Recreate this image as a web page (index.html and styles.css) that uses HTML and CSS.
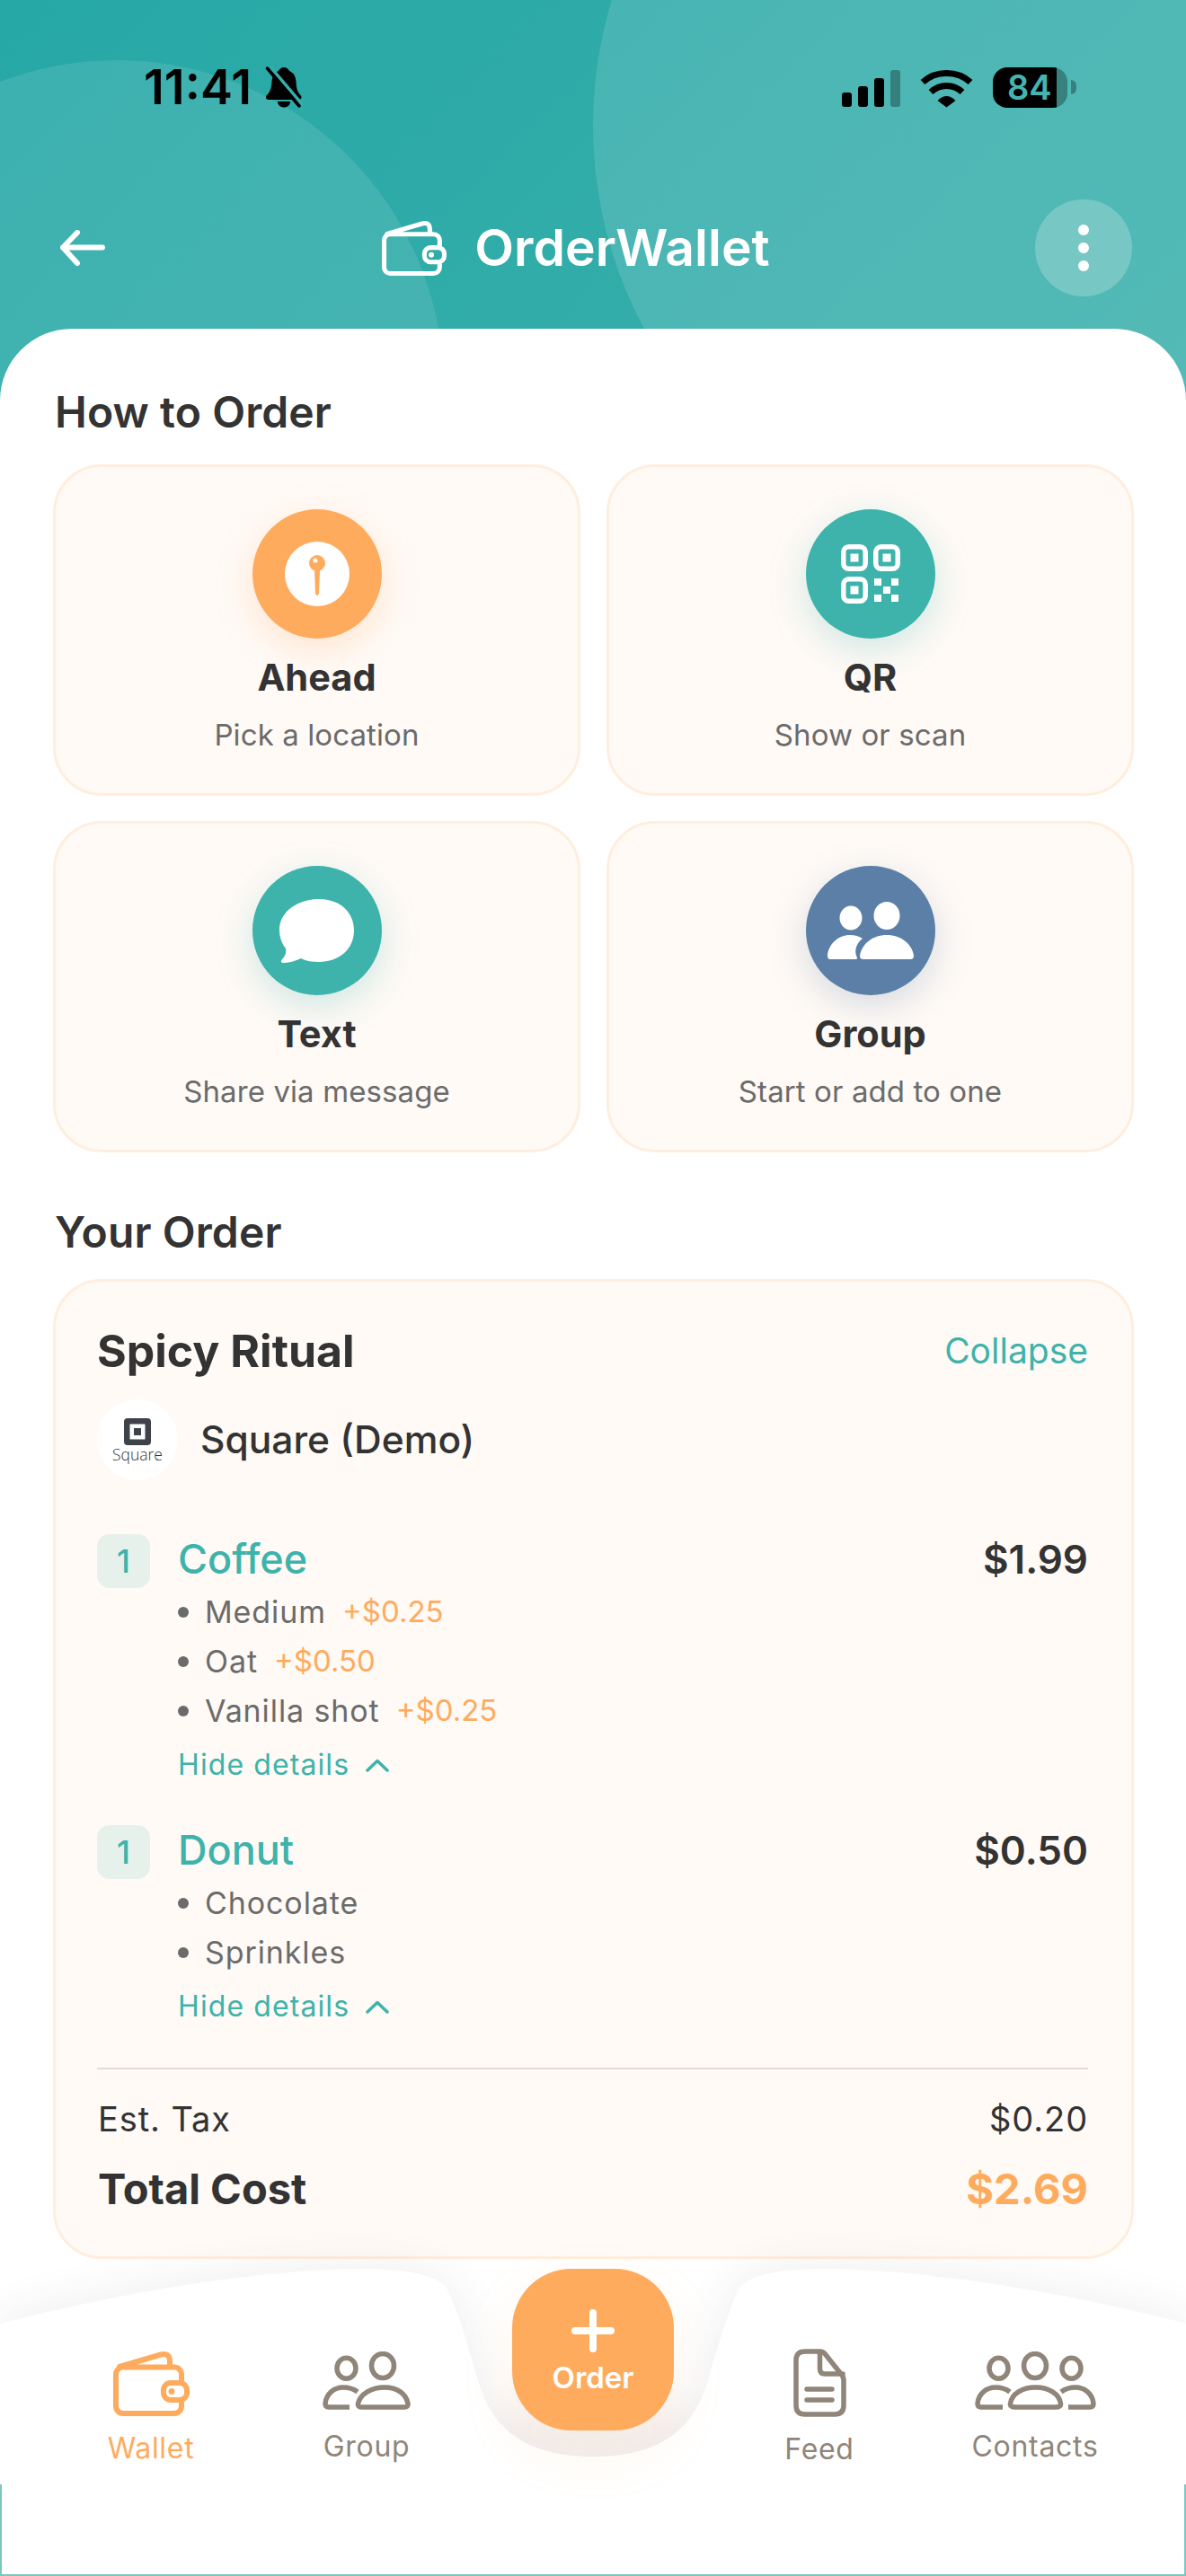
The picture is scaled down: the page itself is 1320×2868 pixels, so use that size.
FILE: index.html
```html
<!DOCTYPE html>
<html lang="en">
<head>
<meta charset="utf-8">
<title>OrderWallet</title>
<link rel="stylesheet" href="styles.css">
</head>
<body>
<svg class="defs" width="0" height="0" aria-hidden="true">
  <defs>
    <symbol id="wallet" viewBox="0 0 85 72">
      <path d="M11 17.5H68a8 8 0 0 1 8 8V32M76 57v4a8 8 0 0 1-8 8H11a8 8 0 0 1-8-8V25.5a8 8 0 0 1 8-8M7 17 53 3.500Q63 1 63 11v6" fill="none" stroke="currentColor" stroke-width="6" stroke-linejoin="round" stroke-linecap="round"/>
      <rect x="56" y="35" width="26" height="19" rx="8" fill="none" stroke="currentColor" stroke-width="6"/>
      <ellipse cx="65" cy="44.500" rx="3.500" ry="3.500" fill="currentColor"/>
    </symbol>
  </defs>
</svg>
<div class="phone">
  <header class="hero">
    <div class="status">
      <div class="status-left">
        <span class="time">11:41</span>
        <svg class="bell" viewBox="0 0 42 46">
          <path d="M21 1c3 0 5 2 6 4 5 2 7 6 7.500 12 .5 7 1 11 5 15 2 2 1 5-2 5H4c-3 0-4-3-2-5 4-4 5-8 5.500-15C8 11 10 7 15 5c1-2 3-4 6-4Z" fill="#000"/>
          <path d="M14 39h14c0 4-3 6.500-7 6.500S14 43 14 39Z" fill="#000"/>
          <path d="M5.500 0 42 43" stroke="#35aeab" stroke-width="3.500"/>
          <path d="M2.500 2 38 44" stroke="#000" stroke-width="3.500" stroke-linecap="round"/>
        </svg>
      </div>
      <div class="status-right">
        <svg class="signal" viewBox="0 0 65 41">
          <rect x="0" y="25" width="11" height="16" rx="3"/>
          <rect x="18" y="18" width="11" height="23" rx="3"/>
          <rect x="36" y="9" width="11" height="32" rx="3"/>
          <rect x="54" y="0" width="11" height="41" rx="3" opacity=".3"/>
        </svg>
        <svg class="wifi" viewBox="0 0 59 43">
          <path d="M3 14.500C17 1 42 1 56 14.500" fill="none" stroke="#000" stroke-width="7"/>
          <path d="M12 25.500C22 16 37 16 47 25.500" fill="none" stroke="#000" stroke-width="7"/>
          <path d="M19.500 35Q29.500 25 39.500 35L29.500 42.500Z" fill="#000"/>
        </svg>
        <div class="battery"><span class="battery-num">84</span></div>
        <span class="battery-nub"></span>
      </div>
    </div>
    <div class="titlebar">
      <div class="back">
        <svg class="back-icon" viewBox="0 0 50 40"><path d="M47 19.500H3M19 3 3 19.500 19 37" fill="none" stroke="#fff" stroke-width="6" stroke-linecap="round" stroke-linejoin="round"/></svg>
      </div>
      <div class="brand">
        <svg class="brand-icon"><use href="#wallet"/></svg>
        <span class="brand-name">OrderWallet</span>
      </div>
      <div class="menu"><span class="dot"></span><span class="dot"></span><span class="dot"></span></div>
    </div>
  </header>

  <main class="sheet">
    <h2 class="section first">How to Order</h2>
    <div class="methods">
      <div class="method">
        <div class="method-icon orange">
          <svg class="i-pin" viewBox="0 0 72 72">
            <circle cx="36" cy="36" r="36" fill="#fff"/>
            <path d="M33 30 34 58Q36 62 38 58L39 30Z" fill="#ffab5e"/>
            <circle cx="36" cy="24" r="9" fill="#ffab5e"/>
            <circle cx="34" cy="21" r="2.500" fill="#fff"/>
          </svg>
        </div>
        <div class="method-name">Ahead</div>
        <div class="method-sub">Pick a location</div>
      </div>
      <div class="method">
        <div class="method-icon teal">
          <svg class="i-qr" viewBox="0 0 66 66">
            <g fill="none" stroke="#fff" stroke-width="5.500">
              <rect x="2.750" y="2.750" width="24.500" height="24.500" rx="6"/>
              <rect x="38.750" y="2.750" width="24.500" height="24.500" rx="6"/>
              <rect x="2.750" y="38.750" width="24.500" height="24.500" rx="6"/>
            </g>
            <g fill="#fff">
              <rect x="10.500" y="10.500" width="9" height="9"/>
              <rect x="46.500" y="10.500" width="9" height="9"/>
              <rect x="10.500" y="46.500" width="9" height="9"/>
              <rect x="37" y="38" width="8" height="8"/>
              <rect x="56" y="38" width="8" height="8"/>
              <rect x="47" y="47" width="8" height="8"/>
              <rect x="37" y="56" width="8" height="8"/>
              <rect x="56" y="56" width="8" height="8"/>
            </g>
          </svg>
        </div>
        <div class="method-name">QR</div>
        <div class="method-sub">Show or scan</div>
      </div>
      <div class="method">
        <div class="method-icon teal">
          <svg class="i-msg" viewBox="0 0 83 71">
            <path d="M44 0C68 0 83 15 83 35C83 56 66 70 44 70C36 70 30 69 24 66C18 69 10 71 4 71C2 71 1 69 3 67C7 63 8 58 7 55C2 48 0 42 0 34C0 15 19 0 44 0Z" fill="#fff"/>
          </svg>
        </div>
        <div class="method-name">Text</div>
        <div class="method-sub">Share via message</div>
      </div>
      <div class="method">
        <div class="method-icon blue">
          <svg class="i-group" viewBox="0 0 96 64">
            <ellipse cx="26" cy="18" rx="12.500" ry="13.500" fill="#fff"/>
            <ellipse cx="66" cy="15.500" rx="14.500" ry="15.500" fill="#fff"/>
            <path d="M3 64H31C33.500 64 33.500 62.500 32 60C30 54 32 46 39 41C35 38.500 31 37 25 37C12 37 1 47 0 60C0 62.500 1 64 3 64Z" fill="#fff"/>
            <path d="M40 64H92C95 64 96 62.500 96 60C94 47 82 37 66 37C50 37 38 47 36 60C36 62.500 37 64 40 64Z" fill="#fff"/>
          </svg>
        </div>
        <div class="method-name">Group</div>
        <div class="method-sub">Start or add to one</div>
      </div>
    </div>

    <h2 class="section second">Your Order</h2>
    <section class="order">
      <div class="order-head">
        <span class="merchant">Spicy Ritual</span>
        <span class="collapse">Collapse</span>
      </div>
      <div class="vendor">
        <div class="vendor-logo">
          <svg class="square-mark" viewBox="0 0 30 30">
            <path fill-rule="evenodd" d="M4 0H26a4 4 0 0 1 4 4V26a4 4 0 0 1-4 4H4a4 4 0 0 1-4-4V4a4 4 0 0 1 4-4ZM7 6.500a.5.5 0 0 0-.5.5V23a.5.5 0 0 0 .5.5H23a.5.5 0 0 0 .5-.5V7a.5.5 0 0 0-.5-.5Z" fill="#3e4349"/>
            <rect x="11" y="11" width="8" height="8" fill="#3e4349"/>
          </svg>
          <span class="square-word">Square</span>
        </div>
        <span class="vendor-name">Square (Demo)</span>
      </div>

      <div class="item">
        <div class="qty">1</div>
        <div class="item-body">
          <div class="item-row">
            <span class="item-name">Coffee</span>
            <span class="item-price">$1.99</span>
          </div>
          <ul class="opts">
            <li class="opt"><span class="opt-name">Medium</span><span class="opt-add">+$0.25</span></li>
            <li class="opt"><span class="opt-name">Oat</span><span class="opt-add">+$0.50</span></li>
            <li class="opt"><span class="opt-name">Vanilla shot</span><span class="opt-add">+$0.25</span></li>
          </ul>
          <div class="hide">Hide details
            <svg class="chev" viewBox="0 0 26 15"><path d="M2 13 13 2.500 24 13" fill="none" stroke="#3db3ab" stroke-width="3.500" stroke-linecap="round" stroke-linejoin="round"/></svg>
          </div>
        </div>
      </div>

      <div class="item">
        <div class="qty">1</div>
        <div class="item-body">
          <div class="item-row">
            <span class="item-name">Donut</span>
            <span class="item-price">$0.50</span>
          </div>
          <ul class="opts">
            <li class="opt"><span class="opt-name">Chocolate</span></li>
            <li class="opt"><span class="opt-name">Sprinkles</span></li>
          </ul>
          <div class="hide">Hide details
            <svg class="chev" viewBox="0 0 26 15"><path d="M2 13 13 2.500 24 13" fill="none" stroke="#3db3ab" stroke-width="3.500" stroke-linecap="round" stroke-linejoin="round"/></svg>
          </div>
        </div>
      </div>

      <div class="divider"></div>
      <div class="sum tax"><span>Est. Tax</span><span>$0.20</span></div>
      <div class="sum total"><span>Total Cost</span><span class="total-val">$2.69</span></div>
    </section>
  </main>

  <nav class="tabbar">
    <svg class="tab-shape" viewBox="0 2400 1320 468" preserveAspectRatio="none">
      <defs>
        <filter id="soft" x="-10%" y="-30%" width="120%" height="160%"><feGaussianBlur stdDeviation="26"/></filter>
        <filter id="softer" x="-40%" y="-40%" width="180%" height="180%"><feGaussianBlur stdDeviation="22"/></filter>
      </defs>
      <path d="M0 2587C130 2553 290 2526 404 2526C450 2526 485 2532 497 2547C512 2578 523 2620 532 2650C545 2695 575 2735 660 2735C745 2735 775 2695 788 2650C797 2620 808 2578 823 2547C835 2532 870 2526 916 2526C1030 2526 1190 2553 1320 2587V2868H0Z" fill="#4a3f5c" opacity=".09" filter="url(#soft)"/>
      <ellipse cx="660" cy="2705" rx="115" ry="35" fill="#8a6060" opacity=".06" filter="url(#softer)"/>
      <path d="M0 2587C130 2553 290 2526 404 2526C450 2526 485 2532 497 2547C512 2578 523 2620 532 2650C545 2695 575 2735 660 2735C745 2735 775 2695 788 2650C797 2620 808 2578 823 2547C835 2532 870 2526 916 2526C1030 2526 1190 2553 1320 2587V2868H0Z" fill="#fff"/>
    </svg>
    <div class="tabs">
      <div class="tab active">
        <svg class="t-wallet"><use href="#wallet"/></svg>
        <span class="tab-label">Wallet</span>
      </div>
      <div class="tab">
        <svg class="t-group" viewBox="0 0 98 65" preserveAspectRatio="xMidYMin meet">
          <g fill="none" stroke="currentColor" stroke-width="5.500" stroke-linecap="round" stroke-linejoin="round">
            <ellipse cx="26.500" cy="18.700" rx="10.500" ry="11.500"/>
            <ellipse cx="67" cy="16" rx="12.500" ry="13.500"/>
            <path d="M30 62H7Q3 62 3 58C4 47 13 40 23 40C30 40 35 42 39 45" stroke-linecap="butt"/>
            <path d="M43 62H91Q95.500 62 95 58C93 47 83 40 69 40C55 40 42 47 39.500 58Q39 62 43 62Z"/>
          </g>
        </svg>
        <span class="tab-label">Group</span>
      </div>
      <button class="order-btn">
        <svg class="plus" viewBox="0 0 48 48"><path d="M24 4V44M4 24H44" stroke="#fff" stroke-width="8" stroke-linecap="round"/></svg>
        <span class="order-label">Order</span>
      </button>
      <div class="tab">
        <svg class="t-feed" viewBox="0 0 59 76">
          <g fill="none" stroke="currentColor" stroke-width="5.500" stroke-linecap="round" stroke-linejoin="round">
            <path d="M13 3H30Q33 3 35 5.500L53 28Q56 31 56 35V63Q56 73 46 73H13Q3 73 3 63V13Q3 3 13 3Z"/>
            <path d="M29.500 4V22Q29.500 28 35 28H55"/>
            <path d="M15 45H43M15 57H43"/>
          </g>
        </svg>
        <span class="tab-label">Feed</span>
      </div>
      <div class="tab">
        <svg class="t-contacts" viewBox="0 0 135 65" preserveAspectRatio="xMidYMin meet">
          <g fill="none" stroke="currentColor" stroke-width="5.500" stroke-linecap="round" stroke-linejoin="round">
            <ellipse cx="26.500" cy="18.700" rx="10.500" ry="11.500"/>
            <ellipse cx="67" cy="16" rx="12.500" ry="13.500"/>
            <ellipse cx="107.500" cy="18.700" rx="10.500" ry="11.500"/>
            <path d="M31 62H7Q3 62 3 58C4 47 13 40 23 40C30 40 35 42 39 45" stroke-linecap="butt"/>
            <path d="M104 62H128Q132 62 132 58C131 47 122 40 112 40C105 40 100 42 96 45" stroke-linecap="butt"/>
            <path d="M45 62H90Q96 62 95.500 58C94 47 82 40 67.500 40C53 40 41 47 39.500 58Q39 62 45 62Z"/>
          </g>
        </svg>
        <span class="tab-label">Contacts</span>
      </div>
    </div>
    <div class="edge"></div>
  </nav>
</div>
</body>
</html>
```
FILE: styles.css
```css
* { box-sizing: border-box; }
html, body { margin: 0; padding: 0; background: #fff; }
body { font-family: Inter, "Liberation Sans", sans-serif; color: #333; }
.defs { position: absolute; }
.phone { position: relative; width: 1320px; height: 2868px; overflow: hidden; background: #fff; }

/* hero */
.hero {
  position: relative;
  height: 446px;
  padding-top: 72px;
  overflow: hidden;
  background: linear-gradient(135deg, #26a8a6 0%, #3bb0ac 100%);
}
.hero::before {
  content: "";
  position: absolute;
  left: -234px;
  top: 67px;
  width: 728px;
  height: 728px;
  border-radius: 50%;
  background: rgba(255, 255, 255, .1);
}
.hero::after {
  content: "";
  position: absolute;
  left: 660px;
  top: -337px;
  width: 954px;
  height: 954px;
  border-radius: 50%;
  background: rgba(255, 255, 255, .13);
}
.status {
  position: relative;
  z-index: 1;
  display: flex;
  justify-content: space-between;
  align-items: center;
  height: 50px;
  padding: 0 122px 0 160px;
}
.status-left { display: flex; align-items: center; gap: 15px; }
.time { font-size: 54px; font-weight: 600; line-height: 50px; color: #000; }
.bell { width: 42px; height: 46px; }
.status-right { display: flex; align-items: center; }
.signal { width: 65px; height: 41px; margin-top: 3px; }
.wifi { width: 59px; height: 43px; margin: 2px 22px 0 22px; }
.battery {
  width: 83px;
  height: 45px;
  border-radius: 16px;
  background: linear-gradient(90deg, #000 0, #000 71px, rgba(0, 0, 0, .3) 71px);
  display: flex;
  align-items: center;
  padding-left: 16px;
}
.battery-num { font-size: 38px; font-weight: 600; line-height: 45px; color: #45b4b1; }
.battery-nub { width: 6px; height: 16px; margin-left: 4px; border-radius: 0 8px 8px 0; background: rgba(0, 0, 0, .3); }

.titlebar {
  position: relative;
  z-index: 1;
  display: flex;
  justify-content: space-between;
  align-items: center;
  height: 108px;
  margin-top: 100px;
  padding: 0 60px 0 67px;
}
.back { width: 63px; display: flex; }
.back-icon { width: 50px; height: 40px; }
.brand { display: flex; align-items: center; gap: 31px; color: #fff; }
.brand-icon { width: 72px; height: 61px; }
.brand-name { font-size: 57px; font-weight: 600; line-height: 70px; color: #fff; }
.menu {
  width: 108px;
  height: 108px;
  border-radius: 50%;
  background: rgba(255, 255, 255, .22);
  display: flex;
  flex-direction: column;
  align-items: center;
  justify-content: center;
  gap: 8px;
}
.dot { width: 12px; height: 12px; border-radius: 50%; background: #fff; }

/* sheet */
.sheet {
  position: relative;
  margin-top: -80px;
  height: 2502px;
  padding: 0 58px 0 59px;
  background: #fff;
  border-radius: 80px 80px 0 0;
}
.section { margin: 0; font-size: 48px; font-weight: 600; line-height: 60px; color: #333; padding-left: 2px; letter-spacing: .1px; }
.section.first { padding-top: 63px; margin-bottom: 28px; }
.section.second { margin-top: 59px; margin-bottom: 22px; }

.methods { display: grid; grid-template-columns: 1fr 1fr; gap: 28px 29px; }
.method {
  height: 369px;
  padding-top: 47px;
  border: 3px solid #ffeedd;
  border-radius: 54px;
  background: #fffaf6;
  display: flex;
  flex-direction: column;
  align-items: center;
}
.method-icon {
  width: 144px;
  height: 144px;
  border-radius: 50%;
  display: flex;
  align-items: center;
  justify-content: center;
}
.orange { background: #ffab5e; box-shadow: 0 12px 40px rgba(255, 171, 94, .25); }
.teal { background: #3db3ab; box-shadow: 0 12px 40px rgba(61, 179, 171, .25); }
.blue { background: #5b7fa6; box-shadow: 0 12px 40px rgba(91, 127, 166, .25); }
.i-pin { width: 72px; height: 72px; }
.i-qr { width: 66px; height: 66px; }
.i-msg { width: 83px; height: 71px; }
.i-group { width: 96px; height: 64px; }
.method-name { margin-top: 17px; font-size: 41.500px; font-weight: 700; line-height: 52px; color: #333; }
.method-sub { margin-top: 16px; font-size: 33px; line-height: 44px; color: #6b6b6b; letter-spacing: .1px; }

/* order card */
.order {
  height: 1091px;
  padding: 47px 48px 0 46px;
  border: 3px solid #ffeedd;
  border-radius: 54px;
  background: #fffaf6;
}
.order-head { display: flex; justify-content: space-between; align-items: center; height: 60px; }
.merchant { font-size: 50px; font-weight: 700; line-height: 60px; }
.collapse { font-size: 39px; line-height: 60px; color: #3db3ab; }
.vendor { display: flex; align-items: center; gap: 25px; margin-top: 24px; }
.vendor-logo {
  width: 90px;
  height: 90px;
  border-radius: 50%;
  background: #fff;
  display: flex;
  flex-direction: column;
  align-items: center;
  padding-top: 21px;
}
.square-mark { width: 30px; height: 30px; flex: none; }
.square-word { font-family: "Open Sans", sans-serif; font-size: 17.500px; font-weight: 300; line-height: 20px; color: #333; }
.vendor-name { font-size: 42.500px; font-weight: 500; line-height: 50px; }

.item { display: flex; margin-top: 45px; }
.vendor + .item { margin-top: 60px; }
.qty {
  flex: none;
  width: 59px;
  height: 60px;
  border-radius: 14px;
  background: #e6f1ec;
  color: #3db3ab;
  font-size: 36px;
  font-weight: 500;
  line-height: 60px;
  text-align: center;
}
.item-body { flex: 1; margin-left: 31px; }
.item-row { display: flex; justify-content: space-between; height: 55px; padding-top: 1px; }
.item-name { font-size: 45px; font-weight: 500; line-height: 54px; color: #3db3ab; }
.item-price { font-size: 44px; font-weight: 600; line-height: 54px; color: #333; }
.opts { list-style: none; margin: 4px 0 0; padding: 0; }
.opt { display: flex; align-items: center; height: 55px; font-size: 34px; color: #6b6b6b; line-height: 55px; letter-spacing: .9px; }
.opt::before { content: ""; width: 12px; height: 12px; margin: 0 18px 0 0; border-radius: 50%; background: #6b6b6b; }
.opt-add { margin-left: 18px; font-size: 33px; color: #ffab5e; letter-spacing: 0; }
.hide { display: flex; align-items: center; gap: 18px; margin-top: 11px; font-size: 32px; line-height: 44px; color: #3db3ab; letter-spacing: 1.100px; }
.chev { width: 26px; height: 15px; }

.divider { height: 2px; margin-top: 46px; background: #e2dbd2; }
.sum { display: flex; justify-content: space-between; padding-left: 1px; }
.tax { margin-top: 30px; font-size: 38px; line-height: 50px; color: #333; letter-spacing: .9px; }
.total { margin-top: 23px; font-size: 47px; font-weight: 700; line-height: 60px; }
.total-val { color: #ffab5e; }

/* bottom nav */
.tabbar { position: absolute; left: 0; right: 0; top: 2400px; height: 468px; }
.tab-shape { position: absolute; left: 0; top: 0; width: 1320px; height: 468px; }
.tabs {
  position: relative;
  display: grid;
  grid-template-columns: 240px 240px 264px 240px 240px;
  padding: 218px 48px 0;
  align-items: start;
}
.tab { display: flex; flex-direction: column; align-items: center; gap: 16px; color: #8f8579; }
.tab.active { color: #ffab5e; }
.t-wallet { width: 85px; height: 72px; }
.t-group { width: 98px; height: 70px; }
.t-feed { width: 59px; height: 76px; margin-top: -3px; }
.t-contacts { width: 135px; height: 70px; }
.tab-label { font-size: 32px; line-height: 40px; letter-spacing: .7px; }
.order-btn {
  justify-self: center;
  width: 180px;
  height: 180px;
  margin-top: -92px;
  padding: 45px 0 0;
  border: 0;
  border-radius: 66px;
  background: #ffab5e;
  box-shadow: 0 24px 60px rgba(255, 171, 94, .12);
  display: flex;
  flex-direction: column;
  align-items: center;
  font-family: inherit;
}
.plus { width: 48px; height: 48px; flex: none; }
.order-label { margin-top: 8px; font-size: 33px; font-weight: 600; line-height: 40px; color: #fff; }
.edge {
  position: absolute;
  left: 0;
  right: 0;
  bottom: 0;
  height: 102px;
  border: 2px solid #7cc6bd;
  border-top: 0;
}
```
